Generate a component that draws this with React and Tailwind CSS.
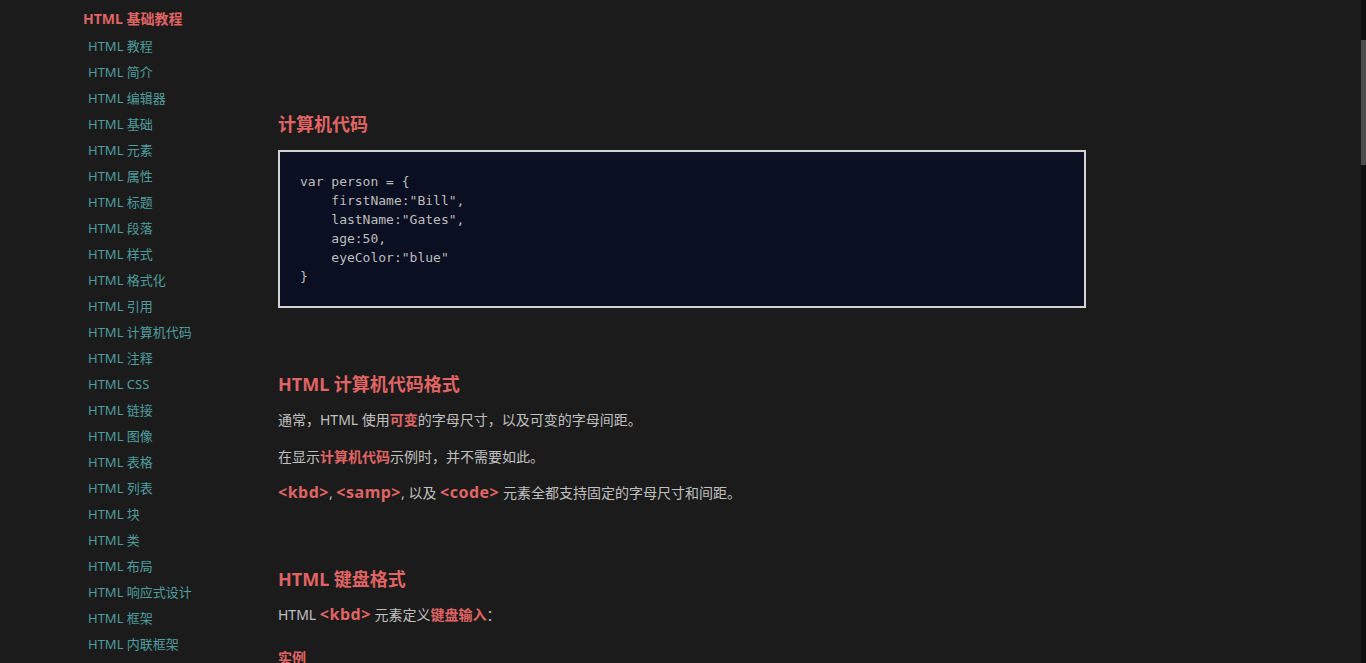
import React from 'react';

const navItems = [
  '教程', '简介', '编辑器', '基础', '元素', '属性', '标题', '段落', '样式', '格式化',
  '引用', '计算机代码', '注释', 'CSS', '链接', '图像', '表格', '列表', '块', '类',
  '布局', '响应式设计', '框架', '内联框架',
];

const codeLines = [
  'var person = {',
  '    firstName:"Bill",',
  '    lastName:"Gates",',
  '    age:50,',
  '    eyeColor:"blue"',
  '}',
];

const Tag = ({ children }) => (
  <span className="font-bold text-[#e06464] text-[16px] leading-[20px] tracking-[0.5px]">{children}</span>
);

const Hl = ({ children }) => <span className="font-bold text-[#e06464]">{children}</span>;

export default function App() {
  return (
    <div
      className="relative h-screen overflow-hidden bg-[#1b1b1b] flex"
      style={{ fontFamily: '"Noto Sans", "Noto Sans CJK SC", sans-serif' }}
    >
      <aside className="w-[240px] shrink-0 pl-[83px] pt-[8px]">
        <div className="text-[14px] font-bold text-[#e06464] leading-[22px]">HTML 基础教程</div>
        <ul className="mt-[3px] pl-[5px]">
          {navItems.map((item) => (
            <li key={item} className="h-[26px] leading-[26px] text-[13px] text-[#4f9d9f]">
              HTML {item}
            </li>
          ))}
        </ul>
      </aside>

      <main className="flex-1 pl-[38px] pt-[111px]">
        <div className="w-[808px]">
          <h2 className="text-[18px] font-bold text-[#e06464] leading-[26px]">计算机代码</h2>
          <div
            className="mt-[13px] border-2 border-[#d2d2d2] bg-[#0b0f22] px-[20px] py-[20px] text-[13px] leading-[19px] text-[#bdbdbd] whitespace-pre"
            style={{ fontFamily: '"DejaVu Sans Mono", monospace' }}
          >
            {codeLines.join('\n')}
          </div>

          <h2 className="mt-[63px] text-[18px] font-bold text-[#e06464] leading-[26px]">HTML 计算机代码格式</h2>
          <p className="mt-[12px] text-[14px] leading-[22px] text-[#c0c0c0]">
            通常，HTML 使用<Hl>可变</Hl>的字母尺寸，以及可变的字母间距。
          </p>
          <p className="mt-[15px] text-[14px] leading-[22px] text-[#c0c0c0]">
            在显示<Hl>计算机代码</Hl>示例时，并不需要如此。
          </p>
          <p className="mt-[14px] text-[14px] leading-[22px] text-[#c0c0c0]">
            <Tag>&lt;kbd&gt;</Tag>, <Tag>&lt;samp&gt;</Tag>, 以及 <Tag>&lt;code&gt;</Tag> 元素全都支持固定的字母尺寸和间距。
          </p>

          <h2 className="mt-[62px] text-[18px] font-bold text-[#e06464] leading-[26px]">HTML 键盘格式</h2>
          <p className="mt-[12px] text-[14px] leading-[22px] text-[#c0c0c0]">
            HTML <Tag>&lt;kbd&gt;</Tag> 元素定义<Hl>键盘输入</Hl>：
          </p>
          <div className="mt-[21px] text-[14px] font-bold text-[#e06464] leading-[22px]">实例</div>
        </div>
      </main>

      <div className="absolute right-0 top-0 h-full w-[5px] bg-[#0f0f0f]">
        <div className="mt-[40px] h-[125px] w-full bg-[#4d4d4d]" />
      </div>
    </div>
  );
}
